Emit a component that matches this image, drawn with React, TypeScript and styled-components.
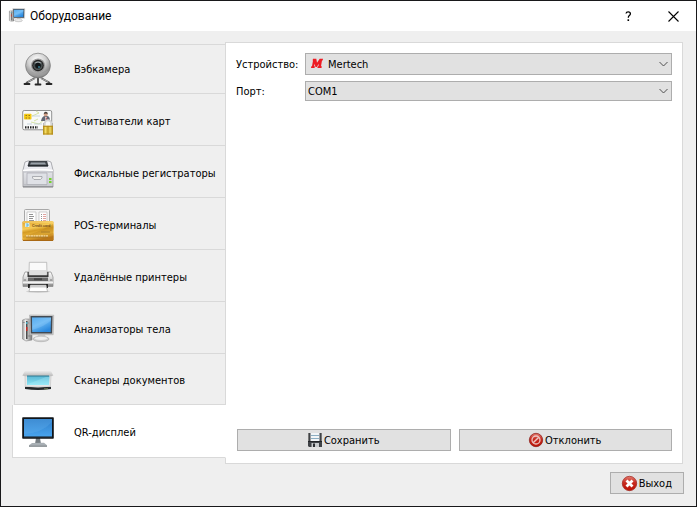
import React, { useState } from "react";
import styled, { createGlobalStyle, css } from "styled-components";

const GlobalStyle = createGlobalStyle`
  *, *::before, *::after { box-sizing: border-box; }
  body { margin: 0; background: #efefef; }
  button, select { font: inherit; color: inherit; }
`;

const edge = "#d9d9d9";

const Window = styled.div`
  display: flex;
  flex-direction: column;
  min-height: 100vh;
  border: 1px solid #18181a;
  background: #efefef;
  color: #000;
  font: 11px/14px "DejaVu Sans Condensed", "DejaVu Sans", sans-serif;
`;

const TitleBar = styled.header`
  display: flex;
  align-items: center;
  height: 30px;
  padding-left: 8px;
  background: #fff;
`;

const Title = styled.h1`
  flex: 1;
  margin: 0 0 0 5px;
  font: 12px/16px Roboto, "Noto Sans", sans-serif;
`;

const CaptionButton = styled.button`
  display: grid;
  place-items: center;
  width: 45px;
  height: 30px;
  padding: 0;
  border: 0;
  background: transparent;
`;

const Body = styled.main`
  flex: 1;
  display: flex;
  align-items: stretch;
  padding: 11px 13px 0 11px;
`;

const TabList = styled.div`
  z-index: 1;
  display: flex;
  flex-direction: column;
  width: 214px;
  margin-right: -1px;
  padding-top: 2px;
`;

const Tab = styled.button<{ $selected: boolean }>`
  display: flex;
  align-items: center;
  gap: 20px;
  height: 52px;
  margin-left: 2px;
  padding: 4px 0 0 7px;
  border: 1px solid ${edge};
  border-top: 0;
  background: #efefef;
  text-align: left;

  &:first-child {
    height: 50px;
    padding-top: 1px;
    border-top: 1px solid ${edge};
  }

  ${(p) =>
    p.$selected &&
    css`
      height: 53px;
      margin-left: 0;
      padding-left: 9px;
      border-right-color: #fff;
      background: #fff;
    `}

  &:nth-last-child(2) {
    height: 51px;
  }
`;

const Panel = styled.section`
  flex: 1;
  display: flex;
  flex-direction: column;
  justify-content: space-between;
  padding: 10px 10px 12px 11px;
  border: 1px solid ${edge};
  background: #fff;
`;

const Fields = styled.div`
  display: grid;
  grid-template-columns: 68px 1fr;
  row-gap: 6px;
  align-items: center;
`;

const FieldLabel = styled.label`
  margin-left: -1px;
  padding-top: 2px;
`;

const Combo = styled.div`
  position: relative;
  display: grid;
`;

const Select = styled.select<{ $withLogo?: boolean }>`
  appearance: none;
  width: 100%;
  height: ${(p) => (p.$withLogo ? 22 : 20)}px;
  padding: 2px 22px 0 ${(p) => (p.$withLogo ? 22 : 2)}px;
  border: 1px solid #adadad;
  border-radius: 0;
  background: #e1e1e1;
`;

const ComboLogo = styled.span`
  position: absolute;
  left: 6px;
  top: 5px;
  display: flex;
  pointer-events: none;
`;

const ComboArrow = styled.span`
  position: absolute;
  right: 4px;
  top: 0;
  bottom: 0;
  display: flex;
  align-items: center;
  pointer-events: none;
`;

const Actions = styled.div`
  display: grid;
  grid-template-columns: 1fr 1fr;
  gap: 8px;
`;

const PushButton = styled.button`
  display: flex;
  align-items: center;
  justify-content: center;
  gap: 2px;
  height: 22px;
  padding: 0 11px;
  border: 1px solid #adadad;
  background: #e1e1e1;
`;

const ButtonText = styled.span`
  padding-top: 2px;
`;

const Footer = styled.footer`
  display: flex;
  justify-content: flex-end;
  padding: 8px 12px 12px;
`;

const Icon = styled.svg`
  flex: none;
  display: block;
  overflow: visible;
`;

const WebcamIcon = () => (
  <Icon width="32" height="32" viewBox="0 0 32 32" aria-hidden="true">
    <defs>
      <radialGradient id="camBody" cx="45%" cy="28%" r="70%">
        <stop offset="0" stopColor="#fff" />
        <stop offset=".5" stopColor="#d2d2d2" />
        <stop offset="1" stopColor="#767676" />
      </radialGradient>
      <radialGradient id="camLens">
        <stop offset="0" stopColor="#245765" />
        <stop offset=".45" stopColor="#10191c" />
        <stop offset="1" stopColor="#626868" />
      </radialGradient>
    </defs>
    <path d="M13 24 4 29M19 24l9 5M16 24v6" stroke="#555" strokeWidth="2" />
    <path d="M2.500 30h5M24.500 30h5M13.500 30.500h5" stroke="#262626" strokeWidth="1.800" strokeLinecap="round" />
    <path d="m6 27.500 7-3M26 27.500l-7-3" stroke="#aaa" />
    <circle cx="16" cy="11.600" r="12.400" fill="url(#camBody)" stroke="#777" strokeWidth=".7" />
    <path d="M5 16q11 7 22 0-3 7-11 7T5 16Z" fill="#aaa" opacity=".5" />
    <circle cx="16" cy="11.500" r="7" fill="#999" />
    <circle cx="16" cy="11.500" r="5.800" fill="#222" />
    <circle cx="16" cy="11.500" r="4.500" fill="url(#camLens)" />
    <circle cx="16" cy="11.500" r="2.500" fill="#101517" />
    <path d="M13 9q3-2 6 0" stroke="#a4abad" fill="none" />
    <circle cx="17" cy="13" r="1" fill="#397c91" />
  </Icon>
);

const CardReaderIcon = () => (
  <Icon width="32" height="32" viewBox="0 0 32 32" aria-hidden="true">
    <defs>
      <linearGradient id="padlock">
        <stop offset="0" stopColor="#a98312" />
        <stop offset=".25" stopColor="#f4dd63" />
        <stop offset=".5" stopColor="#c49b1b" />
        <stop offset=".7" stopColor="#f1db65" />
        <stop offset="1" stopColor="#ad8515" />
      </linearGradient>
    </defs>
    <rect x=".7" y="4.500" width="29" height="19.300" rx="1.500" fill="#f8f9f9" stroke="#929292" />
    <path d="m10 10 7-3-3-2M9 16l8 2 6-5M12 15l4-2" stroke="#d6e4a6" fill="none" />
    <path d="M10 10h8M5 18h5M12 18h8" stroke="#bbcdd6" strokeWidth=".8" />
    <rect x="2" y="7.800" width="7.500" height="5.700" rx=".8" fill="#f4cb18" />
    <path d="M3.500 9.500h1.500M6.500 9.500H8M3.500 12h1.500M6.500 12H8" stroke="#9c7715" />
    <path d="M3 21.300h13" stroke="#242424" strokeWidth="2.200" strokeDasharray="1.500 1" />
    <path d="M19 15q1-5 4-5h2q3 0 3 5Z" fill="#626674" />
    <circle cx="23.700" cy="8.500" r="2" fill="#d1a088" />
    <path d="M21.700 8q.5-2.500 2.300-2.200 2 .2 1.700 2.200-2-1-4 0Z" fill="#463c38" />
    <path d="m23 11 .8 4 1-4" fill="#fff" />
    <path d="m24 11.500.6 2.500" stroke="#b74545" />
    <path d="M22.700 20v-2.500a3.300 3.300 0 0 1 6.600 0V20" fill="none" stroke="#d5d5d5" strokeWidth="2" />
    <path d="M21.500 20v-3M30.500 20v-3" stroke="#999" strokeWidth=".6" />
    <rect x="21" y="19.800" width="10" height="8.700" rx=".6" fill="url(#padlock)" />
    <path d="M21 20.300h10M21 28h10" stroke="#b58a19" />
  </Icon>
);

const LaserPrinterIcon = () => (
  <Icon width="32" height="32" viewBox="0 0 32 32" aria-hidden="true">
    <defs>
      <linearGradient id="laser" x2="0" y2="1">
        <stop offset="0" stopColor="#f7f7fb" />
        <stop offset="1" stopColor="#c7c9ce" />
      </linearGradient>
    </defs>
    <path d="M3 4 6 3h20l3 1 2 8v17H1V12Z" fill="url(#laser)" stroke="#999ba0" strokeWidth=".8" />
    <path d="M7 3h18l1.500 5h-21Z" fill="#40454a" />
    <path d="M9 4.500h14l1 2H8Z" fill="#99a1a8" />
    <path d="M6 8h20" stroke="#171b20" strokeWidth="1.200" />
    <path d="M1 12.500q15-2 30 0" fill="none" stroke="#fff" strokeWidth="1.500" />
    <path d="M1.500 14h29M2 26.800h23" fill="none" stroke="#b5b7bd" />
    <path d="M5 15h20v11.500H5Z" fill="#dfe1e6" stroke="#a9abb2" strokeWidth=".7" />
    <path d="M10.500 18.500h9.500v1.500l-1.500 1.500h-6.500L10.500 20Z" fill="#eee" stroke="#90939a" strokeWidth=".7" />
    <path d="M27 21h2.500M27 24h2.500" stroke="#73d22d" strokeWidth="2" />
    <path d="M1 28.800h30" stroke="#85878b" />
  </Icon>
);

const PosIcon = () => (
  <Icon width="32" height="32" viewBox="0 0 32 32" aria-hidden="true">
    <defs>
      <linearGradient id="gold" x2=".3" y2="1">
        <stop offset="0" stopColor="#dfa02a" />
        <stop offset=".4" stopColor="#f6cb58" />
        <stop offset=".55" stopColor="#d49b25" />
        <stop offset=".8" stopColor="#f1bd40" />
        <stop offset="1" stopColor="#b97718" />
      </linearGradient>
    </defs>
    <rect x="2.500" y="-.5" width="25" height="15" rx="1" fill="#f5f5f5" stroke="#a8a8a8" />
    <path d="M5 2h9v10H5ZM17 2h8v10h-8Z" fill="#fff" stroke="#bbb" strokeWidth=".7" />
    <path d="M7 4.500h4M7 6.500h5M7 8.500h4M7 10.500h5M19 4.500h1M19 6.500h1M19 8.500h1M19 10.500h1" stroke="#777" strokeWidth=".8" />
    <path d="M21 4.500h3M21 6.500h3M21 8.500h3M21 10.500h3" stroke="#d98b88" strokeWidth=".8" />
    <rect x=".3" y="11" width="31.400" height="19.700" rx="1.500" fill="url(#gold)" />
    <path d="M1 26Q13 24 31 14v10Q18 30 1 28Z" fill="#b57b19" opacity=".35" />
    <path d="M1 12h30" stroke="#ffe28a" strokeWidth=".8" />
    <rect x="3" y="13" width="4.500" height="4" rx=".7" fill="#d5edf4" />
    <path d="M4 14h2v2H4" stroke="#40a2bd" fill="none" strokeWidth=".7" />
    <text x="10" y="17" fontFamily="Liberation Sans" fontSize="3.500" fontWeight="700" fill="#6d4815">Credit card</text>
    <path d="M4 26h22" stroke="#f9dda0" strokeWidth="1.600" strokeDasharray="2 .5" />
    <path d="M4 27h22M19 22h9" stroke="#8d682b" strokeWidth=".6" />
    <path d="M1 30.500h30" stroke="#a96813" />
  </Icon>
);

const PrinterIcon = () => (
  <Icon width="32" height="32" viewBox="0 0 32 32" aria-hidden="true">
    <defs>
      <linearGradient id="inkjet" x2="0" y2="1">
        <stop offset="0" stopColor="#fff" />
        <stop offset=".5" stopColor="#d4d4d4" />
        <stop offset="1" stopColor="#858585" />
      </linearGradient>
    </defs>
    <ellipse cx="16" cy="29.500" rx="12" ry="1.500" fill="#d3d3d3" />
    <path d="M3 10h26l2 5v9.500H1V15Z" fill="url(#inkjet)" stroke="#888" strokeWidth=".7" />
    <path d="M5.500 10h21v5h-21Z" fill="#393939" />
    <path d="M7.300.3h17.400L25 13H7Z" fill="#fafafa" stroke="#aaa" strokeWidth=".7" />
    <path d="M8 8h16v5H8Z" fill="#dedede" />
    <path d="M6 15.500h20V19H6Z" fill="#696969" />
    <path d="M12 17.200h8" stroke="#444" strokeWidth="2" />
    <path d="M1 19.500h30v2H1Z" fill="#f2f2f2" />
    <path d="M6 22h20v4H6Z" fill="#252525" />
    <path d="M8.500 23h15.500l1.500 6.500H7Z" fill="#fff" stroke="#999" strokeWidth=".6" />
    <path d="m8.600 23-.5 2.500h16.200l-.6-2.500" fill="#ccc" />
    <path d="M2 18h2M28 18h2" stroke="#777" />
  </Icon>
);

const ComputerIcon = ({ size = 32 }: { size?: number }) => (
  <Icon width={size} height={size} viewBox="0 0 32 32" aria-hidden="true">
    <defs>
      <linearGradient id="pcScreen" x2=".6" y2="1">
        <stop offset="0" stopColor="#3c9eea" />
        <stop offset=".5" stopColor="#67b7f3" />
        <stop offset="1" stopColor="#2b88dd" />
      </linearGradient>
      <linearGradient id="tower">
        <stop offset="0" stopColor="#999" />
        <stop offset=".3" stopColor="#eee" />
        <stop offset="1" stopColor="#777" />
      </linearGradient>
    </defs>
    <path d="m.5 6 3-1H10v21l-6 1-3.500-2Z" fill="url(#tower)" stroke="#888" strokeWidth=".6" />
    <path d="M4.800 7v18" stroke="#353535" strokeWidth="1.300" />
    <path d="M4.800 13v4" stroke="#dd2c25" strokeWidth="1.300" />
    <path d="M4.800 8v2" stroke="#53bed8" strokeWidth="1.300" />
    <path d="M.7 8.500h2M6 9h2M6 22h2" stroke="#777" strokeWidth=".7" />
    <ellipse cx="19" cy="25" rx="8" ry="2.700" fill="#d0d0d0" stroke="#aaa" strokeWidth=".6" />
    <path d="M16 20h7l1 5h-9Z" fill="#c9c9c9" />
    <ellipse cx="19" cy="24.300" rx="6.500" ry="1.600" fill="#f0f0f0" />
    <path d="m7.500 1 24.200.2-.5 19.500H8Z" fill="#cfcfcf" stroke="#aaa" strokeWidth=".6" />
    <path d="m8.500 2 22 .1-.4 17.300H8.800Z" fill="#424a53" />
    <path d="m10 3.500 19 .1-.3 14.400H10.200Z" fill="url(#pcScreen)" />
    <path d="m10 3.500 19 .1v3Q22 13 10.100 16Z" fill="#a9d9ff" opacity=".25" />
  </Icon>
);

const ScannerIcon = () => (
  <Icon width="32" height="32" viewBox="0 0 32 32" aria-hidden="true">
    <defs>
      <linearGradient id="scannerLid" x2="0" y2="1">
        <stop offset="0" stopColor="#f5f5f5" />
        <stop offset="1" stopColor="#b8b8b8" />
      </linearGradient>
      <linearGradient id="scannerBed" x2="0" y2="1">
        <stop offset="0" stopColor="#58b6d3" />
        <stop offset="1" stopColor="#8ce5f4" />
      </linearGradient>
    </defs>
    <path d="M3 6q13-2 26 0l2.300 4.500-2.300.7H3l-2.700-.7Z" fill="url(#scannerLid)" />
    <path d="M3 11h26l-.7 11q-12 2-25 0Z" fill="#e5e5e5" stroke="#c1c1c1" strokeWidth=".6" />
    <path d="M5 11h22.500L27 20H5Z" fill="url(#scannerBed)" />
    <path d="M5 11h22" stroke="#307a91" />
    <path d="m6 19 18-7h3v8H6Z" fill="#c2f7ff" opacity=".25" />
    <path d="M3 21.500q13 1.500 26 0v2.500q-13 2-26 0Z" fill="#25282b" />
    <path d="M3 21.300q13 1.200 26 0" stroke="#d6d6d6" fill="none" />
    <path d="M22 23.800h4" stroke="#9ba86a" strokeWidth=".7" />
  </Icon>
);

const DisplayIcon = () => (
  <Icon width="32" height="32" viewBox="0 0 32 32" aria-hidden="true">
    <defs>
      <linearGradient id="display" x2="0" y2="1">
        <stop offset="0" stopColor="#2e7dc8" />
        <stop offset="1" stopColor="#49a4ee" />
      </linearGradient>
    </defs>
    <path d="M14 21h4l1 6h-6Z" fill="#777e83" />
    <path d="m10 26 12-.2 3 2.500v1.300H7v-1.300Z" fill="#a8afb4" />
    <path d="M7 29.200h18" stroke="#7c8286" />
    <rect x=".2" y=".2" width="31.600" height="21.600" rx=".8" fill="#111519" />
    <path d="M2 2h28v17.500H2Z" fill="url(#display)" />
    <path d="M2 2h28v3Q20 16 2 17Z" fill="#66b2ef" opacity=".3" />
    <path d="M2 20.500h28" stroke="#343a40" strokeWidth=".5" />
  </Icon>
);

const FloppyIcon = () => (
  <Icon width="14" height="14" viewBox="0 0 14 14" aria-hidden="true">
    <path d="M0 0h14v14H1l-1-1Z" fill="#3f4246" />
    <path d="M2.500 0h9v8h-9Z" fill="#f2f5f7" />
    <path d="M3 2.500h8M3 5.500h8" stroke="#8baec2" />
    <path d="M0 8.500h14" stroke="#202326" />
    <path d="M3.500 10H11v4H3.500Z" fill="#c7cacc" />
    <path d="M5 10.500h2V14H5Z" fill="#2b2d30" />
    <path d="M.5 0v8M13.500 0v8" stroke="#777" />
  </Icon>
);

const RedBall = () => (
  <defs>
    <linearGradient id="redBall" x2="0" y2="1">
      <stop offset="0" stopColor="#e37b70" />
      <stop offset=".45" stopColor="#c72b20" />
      <stop offset="1" stopColor="#bc1205" />
    </linearGradient>
  </defs>
);

const RejectIcon = () => (
  <Icon width="14" height="14" viewBox="0 0 14 14" aria-hidden="true">
    <RedBall />
    <circle cx="7" cy="7" r="6.700" fill="url(#redBall)" stroke="#851914" strokeWidth=".7" />
    <circle cx="7" cy="7" r="4" fill="none" stroke="#edc6c2" strokeWidth="1.300" />
    <path d="m4.200 9.800 5.600-5.600" stroke="#edc6c2" strokeWidth="1.500" />
  </Icon>
);

const ExitIcon = () => (
  <Icon width="15" height="15" viewBox="0 0 15 15" aria-hidden="true">
    <circle cx="7.500" cy="7.500" r="7.200" fill="url(#redBall)" stroke="#9d1f18" strokeWidth=".7" />
    <path d="m4.500 4.500 6 6M10.500 4.500l-6 6" stroke="#fff" strokeWidth="2.800" />
  </Icon>
);

const MertechLogo = () => (
  <Icon width="12" height="11" viewBox="0 0 12 11" aria-hidden="true">
    <path
      d="M2 .8h3.300l.7 4L8.700.8H12l-.3 1.700H11l-1 5.800h.8L10.500 10H6.400l.3-1.700h.7l.5-2.500L5.700 9H4.500l-.9-3.200-.5 2.500h.8L3.600 10H0l.3-1.700H1l1-5.800h-.4Z"
      fill="#ed1c24"
    />
  </Icon>
);

const Chevron = () => (
  <Icon width="9" height="6" viewBox="0 0 9 6" aria-hidden="true">
    <path d="m.5 1 4 4 4-4" fill="none" stroke="#505050" />
  </Icon>
);

const sections = [
  { name: "Вэбкамера", Glyph: WebcamIcon },
  { name: "Считыватели карт", Glyph: CardReaderIcon },
  { name: "Фискальные регистраторы", Glyph: LaserPrinterIcon },
  { name: "POS-терминалы", Glyph: PosIcon },
  { name: "Удалённые принтеры", Glyph: PrinterIcon },
  { name: "Анализаторы тела", Glyph: ComputerIcon },
  { name: "Сканеры документов", Glyph: ScannerIcon },
  { name: "QR-дисплей", Glyph: DisplayIcon },
];

export default function App() {
  const [current, setCurrent] = useState(sections.length - 1);

  return (
    <Window>
      <GlobalStyle />
      <TitleBar>
        <ComputerIcon size={16} />
        <Title>Оборудование</Title>
        <CaptionButton aria-label="Справка">
          <Icon width="7" height="10" viewBox="0 0 7 10" aria-hidden="true">
            <path d="M1 2.500Q1.300.8 3.200.8q2.200 0 2.200 1.900 0 1-1.100 1.900-1 .8-1 2.200" fill="none" stroke="#000" strokeWidth="1.300" />
            <path d="M2.500 8.300h1.600V10H2.500Z" />
          </Icon>
        </CaptionButton>
        <CaptionButton aria-label="Закрыть">
          <Icon width="11" height="11" viewBox="0 0 11 11" aria-hidden="true">
            <path d="m.5.5 10 10M10.500.5l-10 10" stroke="#000" strokeWidth="1.100" />
          </Icon>
        </CaptionButton>
      </TitleBar>
      <Body>
        <TabList role="tablist" aria-orientation="vertical">
          {sections.map(({ name, Glyph }, i) => (
            <Tab
              key={name}
              role="tab"
              aria-selected={i === current}
              $selected={i === current}
              onClick={() => setCurrent(i)}
            >
              <Glyph />
              {name}
            </Tab>
          ))}
        </TabList>
        <Panel role="tabpanel" aria-label={sections[current].name}>
          <Fields>
            <FieldLabel htmlFor="device">Устройство:</FieldLabel>
            <Combo>
              <Select id="device" $withLogo>
                <option>Mertech</option>
              </Select>
              <ComboLogo>
                <MertechLogo />
              </ComboLogo>
              <ComboArrow>
                <Chevron />
              </ComboArrow>
            </Combo>
            <FieldLabel htmlFor="port">Порт:</FieldLabel>
            <Combo>
              <Select id="port">
                <option>COM1</option>
              </Select>
              <ComboArrow>
                <Chevron />
              </ComboArrow>
            </Combo>
          </Fields>
          <Actions>
            <PushButton>
              <FloppyIcon />
              <ButtonText>Сохранить</ButtonText>
            </PushButton>
            <PushButton>
              <RejectIcon />
              <ButtonText>Отклонить</ButtonText>
            </PushButton>
          </Actions>
        </Panel>
      </Body>
      <Footer>
        <PushButton>
          <ExitIcon />
          <ButtonText>Выход</ButtonText>
        </PushButton>
      </Footer>
    </Window>
  );
}
